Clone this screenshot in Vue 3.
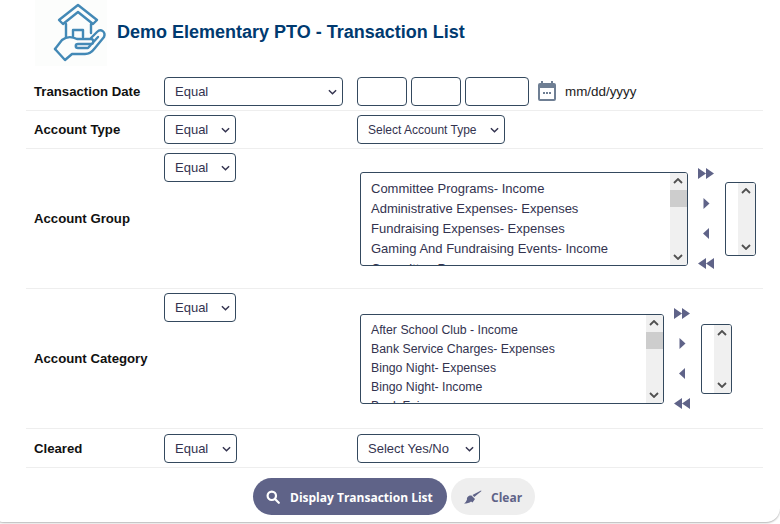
<template>
  <div class="page">
    <div class="card">
      <div class="head">
        <svg class="logo" viewBox="0 0 72 66" fill="none" stroke="#4389b6" stroke-width="2.4" stroke-linejoin="round" stroke-linecap="round">
          <path d="M24 20 L43 5 L62 20 L58 24 L43 12 L28 24 Z" />
          <path d="M31 24 V37 M56 24 V33" />
          <path d="M38 36 V30 H48 V37" />
          <path d="M20 49 L27 40 C32 36 38 37 42 39 H56 C59 39 59 44 56 44 H43 C40 44 40 48 43 48 H53 L63 37" />
          <path d="M20 49 L30 60 L37 54 H50 C54 54 57 52 60 48 L69 37 C71 32 66 28 62 32 L56 38" />
        </svg>
        <h1 class="title">Demo Elementary PTO - Transaction List</h1>
      </div>

      <div class="row row-short">
        <div class="label">Transaction Date</div>
        <div class="op"><div class="select wide">Equal<svg class="chev" viewBox="0 0 10 6"><path d="M1 1l4 4 4-4" /></svg></div></div>
        <div class="value">
          <div class="date-box"></div>
          <div class="date-box"></div>
          <div class="date-box year"></div>
          <svg class="cal" viewBox="0 0 18 20"><path d="M0 4a2 2 0 0 1 2-2h1V0h2v2h8V0h2v2h1a2 2 0 0 1 2 2v14a2 2 0 0 1-2 2H2a2 2 0 0 1-2-2z" fill="#6f7f94" /><rect x="2" y="7" width="14" height="11" fill="#fff" /><path d="M5 11h2v2H5zM8 11h2v2H8zM11 11h2v2h-2z" fill="#6f7f94" /></svg>
          <span class="hint">mm/dd/yyyy</span>
        </div>
      </div>

      <div class="row row-short second">
        <div class="label">Account Type</div>
        <div class="op"><div class="select small">Equal<svg class="chev" viewBox="0 0 10 6"><path d="M1 1l4 4 4-4" /></svg></div></div>
        <div class="value">
          <div class="select type">Select Account Type<svg class="chev" viewBox="0 0 10 6"><path d="M1 1l4 4 4-4" /></svg></div>
        </div>
      </div>

      <div v-for="p in pickers" :key="p.label" class="row row-tall" :class="p.cls">
        <div class="label">{{ p.label }}</div>
        <div class="op"><div class="select small">Equal<svg class="chev" viewBox="0 0 10 6"><path d="M1 1l4 4 4-4" /></svg></div></div>
        <div class="value picker">
          <div class="list">
            <div class="items">
              <div v-for="o in p.options" :key="o">{{ o }}</div>
            </div>
            <div class="bar">
              <svg class="bar-arrow" viewBox="0 0 10 6"><path d="M1 5l4-4 4 4" /></svg>
              <div class="thumb"></div>
              <svg class="bar-arrow down" viewBox="0 0 10 6"><path d="M1 1l4 4 4-4" /></svg>
            </div>
          </div>
          <div class="moves">
            <svg viewBox="0 0 16 11"><path d="M0 0l8 5.500-8 5.500zM8 0l8 5.500-8 5.500z" /></svg>
            <svg viewBox="0 0 16 11"><path d="M5.500 0l6 5.500-6 5.500z" /></svg>
            <svg viewBox="0 0 16 11"><path d="M11 0L5 5.500l6 5.500z" /></svg>
            <svg viewBox="0 0 16 11"><path d="M16 0L8 5.500l8 5.500zM8 0L0 5.500l8 5.500z" /></svg>
          </div>
          <div class="list chosen">
            <div class="items"></div>
            <div class="bar">
              <svg class="bar-arrow" viewBox="0 0 10 6"><path d="M1 5l4-4 4 4" /></svg>
              <svg class="bar-arrow down" viewBox="0 0 10 6"><path d="M1 1l4 4 4-4" /></svg>
            </div>
          </div>
        </div>
      </div>

      <div class="row row-short">
        <div class="label">Cleared</div>
        <div class="op"><div class="select med">Equal<svg class="chev" viewBox="0 0 10 6"><path d="M1 1l4 4 4-4" /></svg></div></div>
        <div class="value">
          <div class="select yesno">Select Yes/No<svg class="chev" viewBox="0 0 10 6"><path d="M1 1l4 4 4-4" /></svg></div>
        </div>
      </div>

      <div class="actions">
        <button class="btn primary">
          <svg viewBox="0 0 14 14" fill="none" stroke="#fff" stroke-width="2.2" stroke-linecap="round"><circle cx="5.8" cy="5.800" r="4.200" /><path d="M9 9l3.800 3.800" /></svg>
          Display Transaction List
        </button>
        <button class="btn ghost">
          <svg viewBox="0 0 18 14" fill="#5f6388"><path d="M0 13.500c3 0 5.500-.5 7-2L8.500 12.500 11 9 7.500 5.500C5 5 2.500 7 3 9.500 2.500 11 1.500 12.500 0 13.500z" /><path d="M8.500 5l1.800 2L17.500 1 17 .5z" /></svg>
          Clear
        </button>
      </div>
    </div>
  </div>
</template>

<script setup>
const pickers = [
  {
    label: 'Account Group',
    cls: 'group',
    options: [
      'Committee Programs- Income',
      'Administrative Expenses- Expenses',
      'Fundraising Expenses- Expenses',
      'Gaming And Fundraising Events- Income',
      'Committee Programs',
    ],
  },
  {
    label: 'Account Category',
    cls: 'category',
    options: [
      'After School Club - Income',
      'Bank Service Charges- Expenses',
      'Bingo Night- Expenses',
      'Bingo Night- Income',
      'Book Fair',
    ],
  },
]
</script>

<style>
html,
body {
  margin: 0;
  background: #fff;
}
</style>

<style scoped>
.page {
  width: 780px;
  height: 524px;
  overflow: hidden;
  font-family: "Liberation Sans", Arial, sans-serif;
  color: #33334f;
}

.card {
  width: 790px;
  height: 522px;
  box-sizing: border-box;
  margin-left: -10px;
  padding: 0 0 0 36px;
  background: #fff;
  border-radius: 0 0 14px 14px;
  box-shadow: 0 1px 2px rgba(0, 0, 0, 0.3);
}

.head {
  display: flex;
  align-items: flex-start;
  height: 72px;
  padding-left: 9px;
}

.logo {
  width: 72px;
  height: 66px;
  margin-right: 10px;
  background: #fcfdfc;
}

.title {
  margin: 22px 0 0;
  font-size: 18px;
  line-height: 21px;
  font-weight: 700;
  color: #003a70;
}

.row {
  display: flex;
  width: 737px;
  border-bottom: 1px solid #eeeeee;
}

.row-short {
  height: 38px;
  align-items: center;
}

.row-short.second {
  height: 37px;
}

.row-tall {
  height: 139px;
}

.label {
  width: 138px;
  padding-left: 8px;
  box-sizing: border-box;
  flex: none;
  font-size: 13.2px;
  font-weight: 700;
  color: #111;
  align-self: center;
}

.op {
  width: 193px;
  flex: none;
}

.row-tall .op {
  padding-top: 4px;
}

.value {
  display: flex;
  align-items: center;
  gap: 4px;
}

.select {
  position: relative;
  display: flex;
  align-items: center;
  box-sizing: border-box;
  height: 29px;
  padding-left: 10px;
  border: 1px solid #34495e;
  border-radius: 4px;
  font-size: 13px;
}

.chev {
  position: absolute;
  right: 5px;
  top: 11px;
  width: 9px;
  height: 6px;
  fill: none;
  stroke: #33334f;
  stroke-width: 1.6;
}

.wide {
  width: 179px;
}

.small {
  width: 72px;
}

.med {
  width: 73px;
}

.type {
  width: 148px;
  font-size: 12px;
}

.yesno {
  width: 123px;
}

.date-box {
  box-sizing: border-box;
  width: 50px;
  height: 29px;
  border: 1px solid #34495e;
  border-radius: 4px;
}

.year {
  width: 64px;
}

.cal {
  width: 18px;
  height: 20px;
  margin-left: 5px;
}

.hint {
  margin-left: 5px;
  font-size: 13.4px;
  color: #222;
}

.picker {
  align-items: flex-start;
  gap: 0;
  padding-left: 3px;
}

.list {
  display: flex;
  box-sizing: border-box;
  border: 1px solid #34495e;
  border-radius: 3px;
  overflow: hidden;
}

.group .list {
  width: 328px;
  height: 94px;
  margin-top: 23px;
  font-size: 13px;
  line-height: 20px;
}

.category .list {
  width: 304px;
  height: 90px;
  margin-top: 25px;
  font-size: 12.3px;
  line-height: 19px;
}

.group .list.chosen {
  width: 31px;
  height: 74px;
  margin-top: 33px;
}

.category .list.chosen {
  width: 31px;
  height: 70px;
  margin-top: 35px;
}

.items {
  flex: 1;
  min-width: 0;
  padding: 6px 10px;
  white-space: nowrap;
  overflow: hidden;
}

.chosen .items {
  padding: 0;
}

.bar {
  position: relative;
  flex: none;
  width: 17px;
  background: #f0f0f0;
}

.bar-arrow {
  position: absolute;
  left: 3px;
  top: 5px;
  width: 10px;
  height: 6px;
  fill: none;
  stroke: #505050;
  stroke-width: 1.8;
}

.bar-arrow.down {
  top: auto;
  bottom: 5px;
}

.thumb {
  margin-top: 17px;
  height: 17px;
  background: #cdcdcd;
}

.moves {
  display: flex;
  flex-direction: column;
  align-items: center;
  justify-content: space-between;
  width: 35px;
  height: 101px;
  margin: 19px 2px 0 0;
  flex: none;
  fill: #5f6388;
}

.moves svg {
  width: 16px;
  height: 11px;
}

.actions {
  display: flex;
  gap: 4px;
  padding: 10px 0 0 227px;
}

.btn {
  display: flex;
  align-items: center;
  height: 37px;
  border: 0;
  border-radius: 19px;
  font-family: "Open Sans", sans-serif;
  font-size: 12px;
  font-weight: 700;
}

.primary {
  width: 194px;
  padding: 1px 0 0 13px;
  gap: 10px;
  background: #5f6388;
  color: #fff;
}

.primary svg {
  width: 14px;
  height: 14px;
}

.ghost {
  width: 84px;
  padding: 1px 0 0 13px;
  gap: 9px;
  background: #eeeeee;
  color: #5f6388;
}

.ghost svg {
  width: 18px;
  height: 14px;
}
</style>
